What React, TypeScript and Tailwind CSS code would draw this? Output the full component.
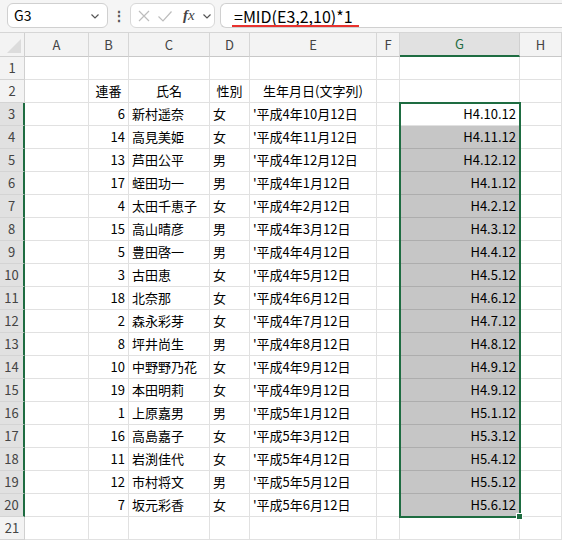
import React from 'react';

const rows: [string, string, string, string, string][] = [
  ['6', '新村遥奈', '女', "'平成4年10月12日", 'H4.10.12'],
  ['14', '高見美姫', '女', "'平成4年11月12日", 'H4.11.12'],
  ['13', '芦田公平', '男', "'平成4年12月12日", 'H4.12.12'],
  ['17', '蛭田功一', '男', "'平成4年1月12日", 'H4.1.12'],
  ['4', '太田千恵子', '女', "'平成4年2月12日", 'H4.2.12'],
  ['15', '高山晴彦', '男', "'平成4年3月12日", 'H4.3.12'],
  ['5', '豊田啓一', '男', "'平成4年4月12日", 'H4.4.12'],
  ['3', '古田恵', '女', "'平成4年5月12日", 'H4.5.12'],
  ['18', '北奈那', '女', "'平成4年6月12日", 'H4.6.12'],
  ['2', '森永彩芽', '女', "'平成4年7月12日", 'H4.7.12'],
  ['8', '坪井尚生', '男', "'平成4年8月12日", 'H4.8.12'],
  ['10', '中野野乃花', '女', "'平成4年9月12日", 'H4.9.12'],
  ['19', '本田明莉', '女', "'平成4年9月12日", 'H4.9.12'],
  ['1', '上原嘉男', '男', "'平成5年1月12日", 'H5.1.12'],
  ['16', '高島嘉子', '女', "'平成5年3月12日", 'H5.3.12'],
  ['11', '岩渕佳代', '女', "'平成5年4月12日", 'H5.4.12'],
  ['12', '市村将文', '男', "'平成5年5月12日", 'H5.5.12'],
  ['7', '坂元彩香', '女', "'平成5年6月12日", 'H5.6.12'],
];

const cell = 'h-[23px] border-r border-b border-[#e1e1e1] flex items-center overflow-hidden whitespace-nowrap';
const rowHead = 'h-[23px] border-b border-[#d4d4d4] flex items-center justify-center text-[13px] text-[#444]';

const Chevron = () => (
  <svg width="12" height="12" viewBox="0 0 12 12" fill="none" stroke="#555" strokeWidth="1.2">
    <path d="M2.5 4.5 L6 8 L9.5 4.5" />
  </svg>
);

const App = () => {
  return (
    <div className="w-[562px] h-[540px] overflow-hidden bg-white" style={{ fontFamily: '"Noto Sans CJK JP", "Noto Sans", sans-serif' }}>
      {/* formula bar */}
      <div className="h-[33px] bg-[#f5f5f5] border-b border-[#d6d6d6] flex items-start pt-[3px] pl-[7px] gap-0">
        <div className="w-[101px] h-[25px] bg-white border border-[#d0d0d0] rounded-md flex items-center justify-between pl-[6px] pr-[6px]">
          <span className="text-[14px] text-black">G3</span>
          <Chevron />
        </div>
        <div className="w-[22px] h-[25px] flex items-center justify-center text-[#555] text-[14px] font-bold">⋮</div>
        <div className="w-[85px] h-[25px] bg-white border border-[#d8d8d8] rounded-md flex items-center pl-[6px] gap-[6px]">
          <svg width="14" height="14" viewBox="0 0 14 14" stroke="#bdbdbd" strokeWidth="1.2">
            <path d="M2 2 L12 12 M12 2 L2 12" />
          </svg>
          <svg width="16" height="14" viewBox="0 0 16 14" fill="none" stroke="#bdbdbd" strokeWidth="1.2">
            <path d="M1.5 7.5 L6 12 L14.5 2.5" />
          </svg>
          <span className="text-[15px] italic text-[#444] ml-[4px]" style={{ fontFamily: '"Liberation Serif", serif' }}>
            <b>f</b>x
          </span>
          <Chevron />
        </div>
        <div className="ml-[5px] flex-1 h-[25px] bg-white border border-r-0 border-[#d0d0d0] rounded-l-md flex items-center pl-[13px]">
          <div className="flex flex-col pt-[2px]">
            <span className="text-[16px] text-black leading-[18px] pr-[6px]">=MID(E3,2,10)*1</span>
            <div className="h-[2px] bg-[#e8322e] -ml-[2px]" />
          </div>
        </div>
      </div>

      {/* sheet */}
      <div className="relative grid grid-cols-[25px_64px_40px_81px_40px_127px_23px_120px_42px] text-[13px] text-black">
        {/* corner */}
        <div className="h-[24px] bg-[#f3f3f3] border-r border-b border-[#d0d0d0] relative">
          <div className="absolute right-[3px] bottom-[3px] w-0 h-0 border-l-[14px] border-l-transparent border-b-[14px] border-b-[#dcdcdc]" />
        </div>
        {['A', 'B', 'C', 'D', 'E', 'F', 'G', 'H'].map((c) =>
          c === 'G' ? (
            <div key={c} className="h-[24px] bg-[#e1e1e1] border-r border-[#d0d0d0] border-b-2 border-b-[#1e6c41] flex items-center justify-center text-[#1e6c41] text-[13px]">
              {c}
            </div>
          ) : (
            <div key={c} className="h-[24px] bg-[#f3f3f3] border-r border-b border-[#d6d6d6] border-b-[#c8c8c8] flex items-center justify-center text-[#444] text-[13px]">
              {c}
            </div>
          )
        )}

        {/* row 1 */}
        <div className={`${rowHead} bg-[#f3f3f3] border-r border-r-[#d0d0d0]`}>1</div>
        {Array.from({ length: 8 }).map((_, i) => (
          <div key={i} className={cell} />
        ))}

        {/* row 2 */}
        <div className={`${rowHead} bg-[#f3f3f3] border-r border-r-[#d0d0d0]`}>2</div>
        <div className={cell} />
        <div className={`${cell} justify-center`}>連番</div>
        <div className={`${cell} justify-center`}>氏名</div>
        <div className={`${cell} justify-center`}>性別</div>
        <div className={`${cell} justify-center`}>生年月日(文字列)</div>
        <div className={cell} />
        <div className={cell} />
        <div className={cell} />

        {rows.map((r, i) => (
          <React.Fragment key={i}>
            <div className={`${rowHead} bg-[#e1e1e1] border-r-2 border-r-[#1e6c41] text-[#1e6c41]`}>{i + 3}</div>
            <div className={cell} />
            <div className={`${cell} justify-end pr-[3px]`}>{r[0]}</div>
            <div className={`${cell} pl-[3px]`}>{r[1]}</div>
            <div className={`${cell} pl-[3px]`}>{r[2]}</div>
            <div className={`${cell} pl-[3px]`}>{r[3]}</div>
            <div className={cell} />
            <div className={`${cell} justify-end pr-[3px] ${i === 0 ? 'bg-white' : 'bg-[#c6c6c6] border-b-[#adadad] border-r-[#adadad]'}`}>{r[4]}</div>
            <div className={cell} />
          </React.Fragment>
        ))}

        {/* row 21 */}
        <div className={`${rowHead} bg-[#f3f3f3] border-r border-r-[#d0d0d0]`}>21</div>
        {Array.from({ length: 8 }).map((_, i) => (
          <div key={i} className={cell} />
        ))}

        {/* selection outline */}
        <div className="absolute left-[399px] top-[69px] w-[122px] h-[416px] border-2 border-[#1e6c41] pointer-events-none">
          <div className="absolute -right-[4px] -bottom-[4px] w-[7px] h-[7px] bg-[#1e6c41] border border-white" />
        </div>
      </div>
    </div>
  );
};

export default App;
